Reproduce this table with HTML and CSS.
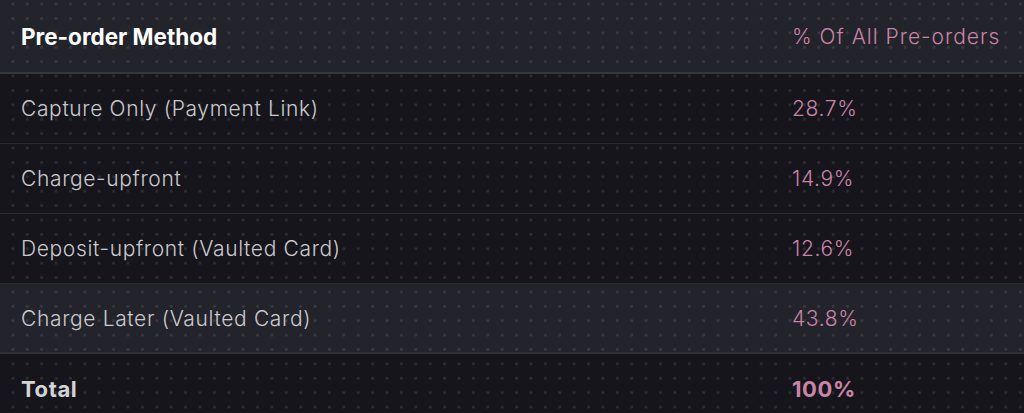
FILE: index.html
```html
<!DOCTYPE html>
<html lang="en">
<head>
<meta charset="utf-8">
<title>Pre-order Methods</title>
<link rel="stylesheet" href="styles.css">
</head>
<body>
<div class="table">
  <div class="row head">
    <div class="cell name">Pre-order Method</div>
    <div class="cell pct">% Of All Pre-orders</div>
  </div>
  <div class="row">
    <div class="cell name">Capture Only (Payment Link)</div>
    <div class="cell pct">28.7%</div>
  </div>
  <div class="row">
    <div class="cell name">Charge-upfront</div>
    <div class="cell pct">14.9%</div>
  </div>
  <div class="row">
    <div class="cell name">Deposit-upfront (Vaulted Card)</div>
    <div class="cell pct">12.6%</div>
  </div>
  <div class="row hl">
    <div class="cell name">Charge Later (Vaulted Card)</div>
    <div class="cell pct">43.8%</div>
  </div>
  <div class="row total">
    <div class="cell name">Total</div>
    <div class="cell pct">100%</div>
  </div>
</div>
</body>
</html>
```

FILE: styles.css
```css
html, body {
  margin: 0;
  padding: 0;
  background: #16151b;
  overflow: hidden;
}
body {
  width: 1024px;
  height: 413px;
  font-family: Inter, "Noto Sans", sans-serif;
}
.table {
  display: flex;
  flex-direction: column;
}
.row {
  display: grid;
  grid-template-columns: 792px 1fr;
  align-items: center;
  height: 70px;
  box-sizing: border-box;
  border-bottom: 1px solid #2a2a31;
  background-color: #16151b;
  background-image: radial-gradient(circle, rgba(255,255,255,0.1) 0 1.2px, transparent 1.7px);
  background-size: 14.4px 14.4px;
  background-position: 5.7px 11.3px;
  background-attachment: fixed;
}
.row.head {
  height: 74px;
  background-color: #22232b;
  border-bottom: 2px solid #35363e;
}
.row.hl {
  background-color: #22232b;
  border-bottom: 2px solid #2e2f37;
}
.row.total {
  border-bottom: none;
}
.cell {
  font-size: 21px;
  font-weight: 350;
  letter-spacing: 0.65px;
}
.cell.name {
  padding-left: 21px;
  color: #cacace;
}
.cell.pct {
  color: #c985a8;
}
.head .cell.name {
  font-size: 22.5px;
  font-weight: 700;
  letter-spacing: 0;
  color: #ffffff;
}
.head .cell.pct {
  letter-spacing: 1px;
}
.total .cell {
  font-size: 22px;
  font-weight: 700;
  letter-spacing: 0.6px;
}
.total .cell.name {
  color: #d4d4d6;
}
```
